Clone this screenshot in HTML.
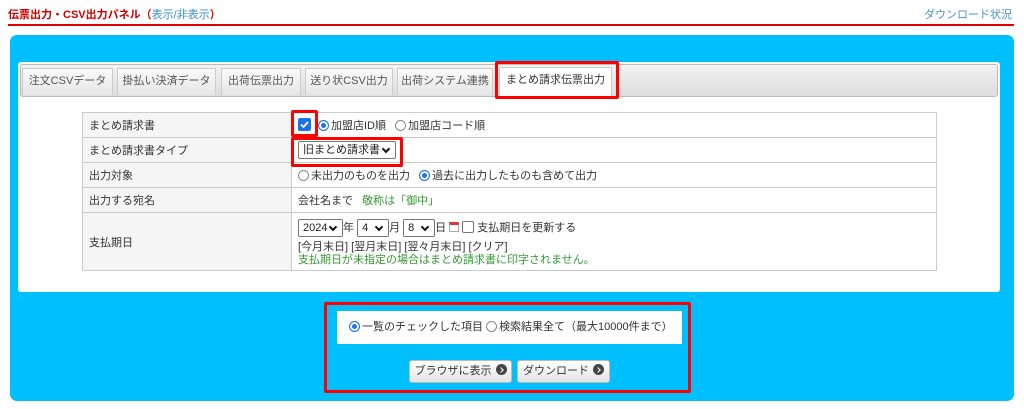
<!DOCTYPE html>
<html><head><meta charset="utf-8"><style>
*{box-sizing:border-box;margin:0;padding:0}
body{width:1024px;height:409px;background:#fff;font-family:"Liberation Sans","Noto Sans CJK JP",sans-serif;font-size:11px;color:#333;position:relative;overflow:hidden}
.a{position:absolute}
.title{left:8px;top:6px;color:#c00;font-weight:bold;font-size:11px}
.title span{color:#3a8fd0;font-weight:normal}
.dl{right:12px;top:6px;color:#4a90c8;font-size:11px}
.line{left:8px;top:24px;width:1006px;height:2px;background:#d00}
.blue{left:10px;top:35px;width:1004px;height:366px;background:#00bfff;border-radius:7px}
.white{left:18px;top:62px;width:982px;height:230px;background:#fff;border-radius:3px}
.tabbar{left:20px;top:64px;width:978px;height:33px;background:linear-gradient(#f2f2f2,#ddd);border:1px solid #bbb;border-radius:3px}
.tab{top:68px;height:27px;background:linear-gradient(#fafafa,#e6e6e6);border:1px solid #ccc;border-bottom:none;text-align:center;line-height:25px;color:#555}
.tab.act{background:#fff;color:#333;top:67px;height:30px}
.red{border:3px solid #f00;border-radius:2px}
table{position:absolute;left:82px;top:112px;width:855px;border-collapse:collapse}
td{border:1px solid #ccc;padding:0 6px;height:25px;vertical-align:middle}
td.l{width:209px;background:#f5f5f5}
.g{color:#339933}
.rad{display:inline-block;width:11px;height:11px;border:1px solid #888;border-radius:50%;vertical-align:-2px;margin-right:2px;background:#fff}
.rad.on{border-color:#1a73e8;box-shadow:inset 0 0 0 2px #fff;background:#1a73e8}
.cb{display:inline-block;width:12px;height:12px;border:1px solid #777;border-radius:2px;vertical-align:-2px;background:#fff}
.sel{display:inline-block;border:1px solid #777;border-radius:2px;height:18px;line-height:16px;padding:0 4px;vertical-align:middle;background:#fff;position:relative;color:#222}
.sel:after{content:"";position:absolute;right:6px;top:4px;width:4px;height:4px;border-right:2px solid #111;border-bottom:2px solid #111;transform:rotate(45deg)}
.btn{top:360px;height:23px;border:1px solid #bbb;border-radius:3px;background:linear-gradient(#fff,#e4e4e4);line-height:21px;text-align:center;color:#333}
.dot{display:inline-block;width:11px;height:11px;border-radius:50%;background:#444;vertical-align:-1px;margin-left:4px;position:relative}
.dot:after{content:"";position:absolute;left:3px;top:3.5px;width:3px;height:3px;border-right:1.5px solid #fff;border-top:1.5px solid #fff;transform:rotate(45deg)}
</style></head><body>
<div class="a title">伝票出力・CSV出力パネル（<span>表示/非表示</span>）</div>
<div class="a dl">ダウンロード状況</div>
<div class="a line"></div>
<div class="a blue"></div>
<div class="a white"></div>
<div class="a tabbar"></div>
<div class="a tab" style="left:22px;width:91px">注文CSVデータ</div>
<div class="a tab" style="left:117px;width:99px">掛払い決済データ</div>
<div class="a tab" style="left:221px;width:80px">出荷伝票出力</div>
<div class="a tab" style="left:305px;width:88px">送り状CSV出力</div>
<div class="a tab" style="left:397px;width:96px">出荷システム連携</div>
<div class="a tab act" style="left:499px;width:113px">まとめ請求伝票出力</div>
<div class="a red" style="left:495px;top:61px;width:124px;height:38px"></div>
<table>
<tr><td class="l">まとめ請求書</td><td style="padding-left:26px"><span class="rad on"></span>加盟店ID順 &nbsp; <span class="rad"></span>加盟店コード順</td></tr>
<tr><td class="l">まとめ請求書タイプ</td><td><span class="sel" style="width:98px">旧まとめ請求書</span></td></tr>
<tr><td class="l">出力対象</td><td><span class="rad"></span>未出力のものを出力 &nbsp; <span class="rad on"></span>過去に出力したものも含めて出力</td></tr>
<tr><td class="l">出力する宛名</td><td>会社名まで &nbsp; <span class="g">敬称は「御中」</span></td></tr>
<tr><td class="l" style="height:58px">支払期日</td><td style="line-height:13px;padding-top:3px"><span class="sel" style="width:45px">2024</span>年 <span class="sel" style="width:32px">4</span>月 <span class="sel" style="width:32px">8</span>日 <span style="display:inline-block;width:10px;height:10px;border:1px solid #aaa;border-top:3px solid #d33;vertical-align:-1px"></span> <span class="cb"></span> 支払期日を更新する<br><span style="display:block;margin-top:4px">[今月末日] [翌月末日] [翌々月末日] [クリア]</span><span class="g">支払期日が未指定の場合はまとめ請求書に印字されません。</span></td></tr>
</table>
<svg class="a" style="left:298px;top:118px" width="13" height="13" viewBox="0 0 13 13"><rect x="0" y="0" width="13" height="13" rx="2" fill="#1a73e8"/><path d="M3 6.5 L5.5 9 L10 4" stroke="#fff" stroke-width="1.8" fill="none"/></svg>
<div class="a red" style="left:291px;top:110px;width:27px;height:27px"></div>
<div class="a red" style="left:291px;top:137px;width:112px;height:30px"></div>
<div class="a" style="left:337px;top:311px;width:345px;height:33px;background:#fff;line-height:33px;padding-left:12px;color:#333"><span class="rad on"></span>一覧のチェックした項目 <span class="rad"></span>検索結果全て（最大10000件まで）</div>
<div class="a btn" style="left:409px;width:103px">ブラウザに表示<span class="dot"></span></div>
<div class="a btn" style="left:517px;width:93px">ダウンロード<span class="dot"></span></div>
<div class="a red" style="left:324px;top:302px;width:367px;height:91px"></div>
</body></html>
